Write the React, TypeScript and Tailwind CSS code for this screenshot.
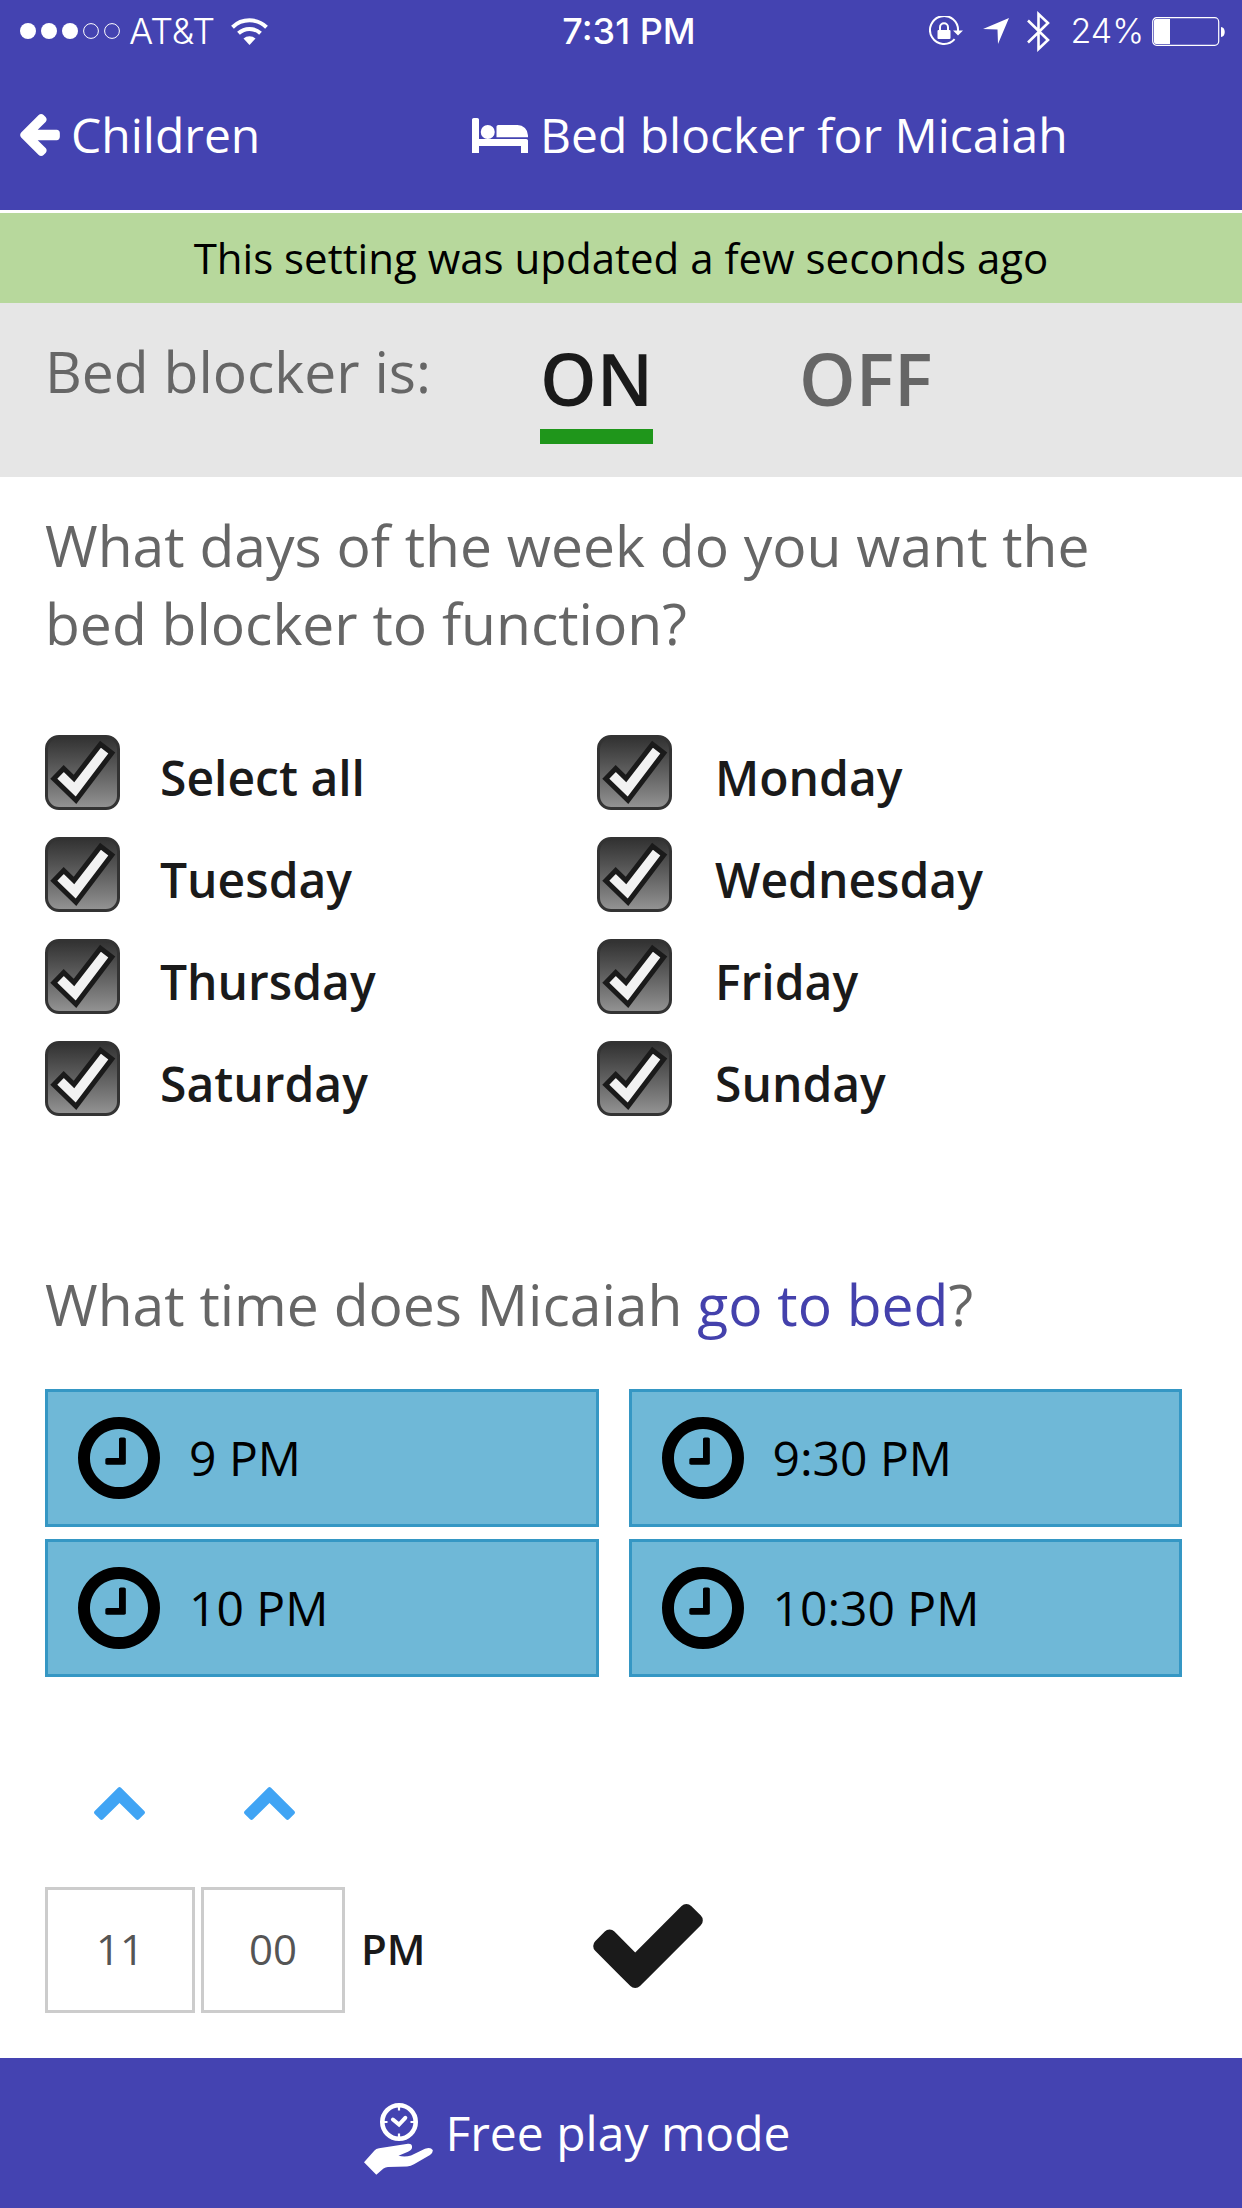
import { useState } from 'react'

const DAYS = ['Select all', 'Monday', 'Tuesday', 'Wednesday', 'Thursday', 'Friday', 'Saturday', 'Sunday']
const TIMES = ['9 PM', '9:30 PM', '10 PM', '10:30 PM']

const StatusBar = () => (
  <div className="grid h-[60px] grid-cols-[1fr_auto_1fr] items-center pl-5 pr-4 pt-[2px] font-['Inter',sans-serif] text-[36px] leading-10">
    <div className="flex items-center">
      <svg viewBox="0 0 101 16" className="mr-2 h-4 w-[101px]" fill="currentColor">
        <circle cx="8" cy="8" r="8" />
        <circle cx="29" cy="8" r="8" />
        <circle cx="50" cy="8" r="8" />
        <circle cx="71" cy="8" r="7.4" fill="none" stroke="currentColor" />
        <circle cx="92" cy="8" r="7.4" fill="none" stroke="currentColor" />
      </svg>
      <span className="font-light">AT&amp;T</span>
      {/* wifi */}
      <svg viewBox="0 0 37 27" className="ml-4 h-[27px] w-[37px]" fill="none" stroke="currentColor" strokeWidth="4">
        <path d="M1.5 9.2a24.5 24.5 0 0 1 34 0" />
        <path d="M7.5 15.3a16 16 0 0 1 22 0" />
        <path d="M18.5 27l-6-6.5a9 9 0 0 1 12 0z" fill="currentColor" stroke="none" />
      </svg>
    </div>
    <span className="pl-3 font-medium">7:31 PM</span>
    <div className="flex items-center justify-end">
      {/* rotation lock */}
      <svg viewBox="0 0 34 30" className="mr-5 h-[30px] w-[34px]" fill="none" stroke="currentColor" strokeWidth="2">
        <path d="M25.6 23.2A14 14 0 1 1 29 15" />
        <path d="M24 14.5h10l-5 5z" fill="currentColor" stroke="none" />
        <rect x="8.5" y="14" width="13" height="9" rx="1" fill="currentColor" stroke="none" />
        <path d="M11 14.5v-3.3a4 4 0 0 1 8 0v3.3" />
      </svg>
      {/* location */}
      <svg viewBox="0 0 26 26" className="mr-[18px] h-[26px] w-[26px]" fill="currentColor">
        <path d="M26 0L15 26l-.5-14.5L0 11z" />
      </svg>
      {/* bluetooth */}
      <svg viewBox="0 0 23 41" className="mr-5 h-[41px] w-[23px]" fill="none" stroke="currentColor" strokeWidth="2.6">
        <path d="M1 9.5l20 19.5-9.500 9V3l9.500 9L1 31.5" />
      </svg>
      <span className="text-[34px] font-light">24%</span>
      {/* battery */}
      <svg viewBox="0 0 74 29" className="ml-2 h-[29px] w-[74px]" fill="currentColor">
        <rect x="0.7" y="0.7" width="66" height="27.6" rx="4" fill="none" stroke="currentColor" strokeWidth="1.2" />
        <path d="M4 2h14v25H4a2 2 0 0 1-2-2V4a2 2 0 0 1 2-2z" />
        <path d="M69 10c5 0 5 10 0 10z" />
      </svg>
    </div>
  </div>
)

const ClockIcon = () => (
  <svg viewBox="0 128 1536 1536" className="h-[82px] w-[82px] shrink-0" fill="currentColor">
    <path d="M896 544v448q0 14-9 23t-23 9h-320q-14 0-23-9t-9-23v-64q0-14 9-23t23-9h224v-352q0-14 9-23t23-9h64q14 0 23 9t9 23zM1312 896q0-148-73-273t-198-198-273-73-273 73-198 198-73 273 73 273 198 198 273 73 273-73 198-198 73-273zM1536 896q0 209-103 385.5t-279.5 279.5-385.5 103-385.5-103-279.5-279.5-103-385.5 103-385.5 279.5-279.5 385.5-103 385.5 103 279.5 279.5 103 385.5z" />
  </svg>
)

const UpIcon = () => (
  <svg viewBox="0 0 51 33" className="h-[33px] w-[51px]" fill="currentColor">
    <path d="M24 .7q1.5-1.4 3 0L50.3 24q1.4 1.5 0 3l-5.300 5.300q-1.500 1.400-3 0L25.5 16 9 32.300q-1.500 1.400-3 0L.7 27q-1.400-1.500 0-3z" />
  </svg>
)

const DayCheck = ({ day, checked, onToggle }: { day: string; checked: boolean; onToggle: () => void }) => (
  <>
    <span className="relative h-[75px] w-[75px]">
      <input
        id={day}
        type="checkbox"
        checked={checked}
        onChange={onToggle}
        className="block h-[75px] w-[75px] appearance-none rounded-[14px] border-[3px] border-[#333] bg-linear-to-b from-[#333] to-[#929292]"
      />
      {checked && (
        <svg viewBox="0 0 75 75" className="pointer-events-none absolute inset-0">
          <path
            d="M8.8 43.7L18.7 33.5 29 43.5 55.5 9.2 66.8 18 31 65.2z"
            fill="#f2f2f2"
            stroke="#1a1a1a"
            strokeWidth="5"
          />
        </svg>
      )}
    </span>
    <label htmlFor={day} className="text-[48px] font-semibold leading-[86px] text-[#1a1a1a]">
      {day}
    </label>
  </>
)

const App = () => {
  const [on, setOn] = useState(true)
  const [days, setDays] = useState<string[]>(DAYS)
  const [hour, setHour] = useState(11)
  const [minute, setMinute] = useState(0)

  const toggleDay = (day: string) => {
    if (day === 'Select all') {
      setDays(days.includes(day) ? [] : DAYS)
      return
    }
    setDays(days.includes(day) ? days.filter((d) => d !== day) : [...days, day])
  }

  return (
    <div className="flex min-h-screen flex-col bg-white font-['Open_Sans',sans-serif] text-black">
      <header className="bg-[#4443b1] text-white">
        <StatusBar />
        <nav className="grid h-[150px] grid-cols-[38%_1fr] items-center text-[48px] leading-[66px]">
          <a href="#" className="flex items-center gap-[11px] pl-5">
            <svg viewBox="64 181 1472 1558" className="h-[42px] w-10" fill="currentColor">
              <path d="M1536 896v128q0 53-32.5 90.5t-84.5 37.5h-704l293 294q38 36 38 90t-38 90l-75 76q-37 37-90 37-52 0-91-37l-651-652q-37-37-37-90 0-52 37-91l651-650q38-38 91-38 52 0 90 38l75 74q38 38 38 91t-38 91l-293 293h704q52 0 84.5 37.5t32.5 90.5z" />
            </svg>
            Children
          </a>
          <h1 className="flex items-center gap-3">
            <svg viewBox="0 256 2048 1280" className="h-[35px] w-14" fill="currentColor">
              <path d="M256 1024h1728q26 0 45 19t19 45v448h-256v-256h-1536v256h-256v-1216q0-26 19-45t45-19h128q26 0 45 19t19 45v704zM832 768q0-106-75-181t-181-75-181 75-75 181 75 181 181 75 181-75 75-181zM2048 960v-64q0-159-112.5-271.5t-271.5-112.5h-704q-26 0-45 19t-19 45v384h1152z" />
            </svg>
            Bed blocker for Micaiah
          </h1>
        </nav>
      </header>

      <p className="mt-[3px] bg-[#b7d89c] text-center text-[42px] leading-[90px]">
        This setting was updated a few seconds ago
      </p>

      <section className="flex h-[174px] items-start bg-[#e6e6e6] pl-[45px] pt-6">
        <h2 className="w-[495px] text-[57px] leading-[88px] text-[#666]">Bed blocker is:</h2>
        <button
          type="button"
          aria-pressed={on}
          onClick={() => setOn(true)}
          className={`mr-[146px] border-b-[15px] text-[72px] font-semibold leading-[102px] ${on ? 'border-[#1f961b] text-[#1a1a1a]' : 'border-transparent text-[#666]'}`}
        >
          ON
        </button>
        <button
          type="button"
          aria-pressed={!on}
          onClick={() => setOn(false)}
          className={`border-b-[15px] text-[72px] font-semibold leading-[102px] ${on ? 'border-transparent text-[#666]' : 'border-[#1f961b] text-[#1a1a1a]'}`}
        >
          OFF
        </button>
      </section>

      <main className="flex-1 pb-[45px] pl-[45px] pr-[60px] pt-[29px]">
        <h2 className="text-[57px] leading-[78px] text-[#666]">
          What days of the week do you want the bed blocker to function?
        </h2>

        <div className="mt-[73px] grid grid-cols-[115fr_437fr_118fr_467fr] items-start gap-y-4">
          {DAYS.map((day) => (
            <DayCheck key={day} day={day} checked={days.includes(day)} onToggle={() => toggleDay(day)} />
          ))}
        </div>

        <h2 className="mt-[138px] text-[57px] leading-[78px] text-[#666]">
          What time does Micaiah <a href="#" className="text-[#4441ac]">go to bed</a>?
        </h2>

        <div className="mt-[46px] grid grid-cols-2 gap-x-[30px] gap-y-3">
          {TIMES.map((time) => (
            <button
              key={time}
              type="button"
              className="flex h-[138px] items-center gap-[29px] border-[3px] border-[#3597c4] bg-[#6fb8d7] pl-[30px] text-[48px] leading-[66px]"
            >
              <ClockIcon />
              {time}
            </button>
          ))}
        </div>

        {/* custom time picker */}
        <div className="mt-[90px] flex text-[#40a4f4]">
          <button type="button" aria-label="Later hour" onClick={() => setHour((hour % 12) + 1)} className="flex w-[150px] justify-center py-5 pr-[2px]">
            <UpIcon />
          </button>
          <button type="button" aria-label="Later minute" onClick={() => setMinute((minute + 15) % 60)} className="flex w-[150px] justify-center py-5 pr-[2px]">
            <UpIcon />
          </button>
        </div>
        <div className="mt-[47px] flex items-center">
          <input
            aria-label="Hour"
            value={hour}
            onChange={(e) => setHour(Number(e.target.value))}
            className="h-[126px] w-[150px] border-[3px] border-[#ccc] pb-1 text-center text-[42px] text-[#555]"
          />
          <input
            aria-label="Minute"
            value={String(minute).padStart(2, '0')}
            onChange={(e) => setMinute(Number(e.target.value))}
            className="ml-[6px] h-[126px] w-36 border-[3px] border-[#ccc] pb-1 text-center text-[42px] text-[#555]"
          />
          <span className="w-[248px] pb-[2px] pl-4 text-[42px] font-semibold leading-[58px] text-[#1a1a1a]">PM</span>
          <button type="button" aria-label="Save time" className="pb-2 text-[#1a1a1a]">
            <svg viewBox="121 334 1550 1188" className="h-[84px] w-[110px]" fill="currentColor">
              <path d="M1671 566q0 40-28 68l-724 724-136 136q-28 28-68 28t-68-28l-136-136-362-362q-28-28-28-68t28-68l136-136q28-28 68-28t68 28l294 295 656-657q28-28 68-28t68 28l136 136q28 28 28 68z" />
            </svg>
          </button>
        </div>
      </main>

      <footer className="bg-[#4443b1] text-white">
        <button type="button" className="flex h-[150px] w-full items-center justify-center gap-3 pr-[87px] text-[48px] leading-[66px]">
          <svg viewBox="0 0 69 72" className="mt-3 h-[72px] w-[69px]" fill="none" stroke="currentColor">
            <circle cx="35" cy="19" r="16.7" strokeWidth="4.6" />
            <path d="M35 4v3.5M35 30.5V34M20 19h3.5M46.5 19H50" strokeWidth="2.2" />
            <path d="M28.9 16.5l6.1 5 6.3-6.7" strokeWidth="4" strokeLinecap="round" />
            <path
              d="M0 59.3L10.5 47.5Q12 45.7 15 45.2L44 40.8Q48.5 40.5 48 44.5 48 47 44 48.7L34.5 52.8Q41 54.5 47 52.5L61 45.8Q66.5 43.7 68.7 47 69.3 49.5 66 52L50 61.3Q47 63.2 43 63.5L24 64Q21.5 64 19.5 65.5L12.3 71.7z"
              fill="currentColor"
              stroke="none"
            />
          </svg>
          Free play mode
        </button>
      </footer>
    </div>
  )
}

export default App
